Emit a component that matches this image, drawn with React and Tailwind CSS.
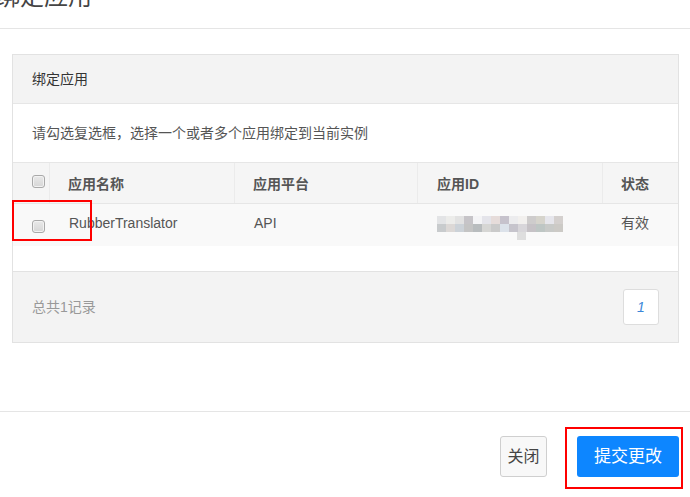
const mosaic = [
  ["#e3e4e6", "#ececea", "#e2e2e2", "#c6c4c8", "#f4f4f6", "#e4e4ea", "#e6dcda", "#c6c2cc", "#ececee", "#f2f0ee", "#cecccc", "#d6d4cc", "#e6e6ec", "#d4d0ce"],
  ["#c8cbcd", "#dcd8d6", "#ccd2d8", "#c4c4c4", "#b8bcbe", "#d6d6d4", "#cacaca", "#dce2ea", "#c6c4cc", "#d8d6da", "#c6c2c6", "#bec6c4", "#c8cac8", "#cccac6"],
];

const Checkbox = () => (
  <span className="block w-[13px] h-[13px] rounded-[3px] border border-[#a9a9a9] bg-gradient-to-b from-[#e9e9e9] to-[#d6d6d6] shadow-[inset_0_0_0_1px_#f2f2f2]" />
);

const App = () => {
  return (
    <div
      className="relative w-[690px] h-[497px] overflow-hidden bg-white"
      style={{ fontFamily: '"Liberation Sans", "Noto Sans CJK SC", sans-serif' }}
    >

      {/* modal header */}
      <div className="h-[29px] overflow-hidden border-b border-[#e5e5e5]">
        <h1 className="-mt-[19px] -ml-[4px] text-[24px] leading-[32px] text-[#444]">
          绑定应用
        </h1>
      </div>

      {/* modal body */}
      <div className="pt-[25px] pl-[12px]">

        <div className="w-[667px] border border-[#e2e2e2]">

          {/* panel heading */}
          <div className="h-[49px] flex items-center px-[19px] bg-[#f3f3f3] border-b border-[#e6e6e6] text-[14px] text-[#333]">
            绑定应用
          </div>

          <div className="h-[58px] flex items-center px-[19px] text-[14px] text-[#555]">
            请勾选复选框，选择一个或者多个应用绑定到当前实例
          </div>

          {/* table */}
          <div className="text-[14px]">

            <div className="h-[42px] flex bg-[#f5f5f5] border-t border-b border-[#e6e6e6] font-bold text-[#555]">
              <div className="w-[37px] flex items-center pl-[19px] pb-[3px] border-r border-[#ebebeb]">
                <Checkbox />
              </div>
              <div className="w-[185px] flex items-center pl-[18px] pt-[3px] border-r border-[#ebebeb]">
                应用名称
              </div>
              <div className="w-[183px] flex items-center pl-[18px] pt-[3px] border-r border-[#ebebeb]">
                应用平台
              </div>
              <div className="w-[185px] flex items-center pl-[19px] pt-[3px] border-r border-[#ebebeb]">
                应用ID
              </div>
              <div className="flex-1 flex items-center pl-[18px] pt-[3px]">
                状态
              </div>
            </div>

            <div className="h-[42px] flex bg-[#f9f9f9] text-[#555]">
              <div className="w-[37px] flex items-center pl-[19px] pt-[2px]">
                <Checkbox />
              </div>
              <div className="w-[185px] flex items-center pl-[19px] pb-[4px]">
                RubberTranslator
              </div>
              <div className="w-[183px] flex items-center pl-[19px] pb-[4px]">
                API
              </div>
              <div className="w-[185px] flex items-center pl-[19px]">
                {/* blurred id */}
                <div className="mt-[6px]">
                  {mosaic.map((row, r) => (
                    <div key={r} className="flex">
                      {row.map((c, i) => (
                        <span
                          key={i}
                          className="block w-[9px] h-[8px]"
                          style={{ backgroundColor: c }}
                        />
                      ))}
                    </div>
                  ))}
                  <div className="ml-[80px] w-[9px] h-[8px] bg-[#dedede]" />
                </div>
              </div>
              <div className="flex-1 flex items-center pl-[18px] pb-[4px]">
                有效
              </div>
            </div>

            <div className="h-[25px]" />

          </div>

          {/* panel footer */}
          <div className="h-[71px] flex items-center justify-between pl-[19px] pr-[19px] bg-[#f3f3f3] border-t border-[#e2e2e2]">
            <span className="text-[14px] text-[#999]">总共1记录</span>
            <span className="w-[36px] h-[36px] flex items-center justify-center bg-white border border-[#dddddd] rounded-[3px] text-[14px] italic text-[#3a86d8]">
              1
            </span>
          </div>

        </div>
      </div>

      {/* modal footer */}
      <div className="mt-[68px] border-t border-[#e5e5e5] flex justify-end gap-[30px] pt-[24px] pr-[11px]">
        <button className="w-[47px] h-[41px] bg-[#f8f8f8] border border-[#cfcfcf] rounded-[3px] text-[16px] text-[#444]">
          关闭
        </button>
        <button className="w-[102px] h-[41px] bg-[#0d86ff] rounded-[3px] text-[17px] text-white">
          提交更改
        </button>
      </div>

      {/* annotation boxes */}
      <div className="absolute left-[12px] top-[200px] w-[80px] h-[41px] border-2 border-[#f00]" />
      <div className="absolute left-[565px] top-[427px] w-[118px] h-[62px] border-2 border-[#f00]" />

    </div>
  );
};

export default App;
